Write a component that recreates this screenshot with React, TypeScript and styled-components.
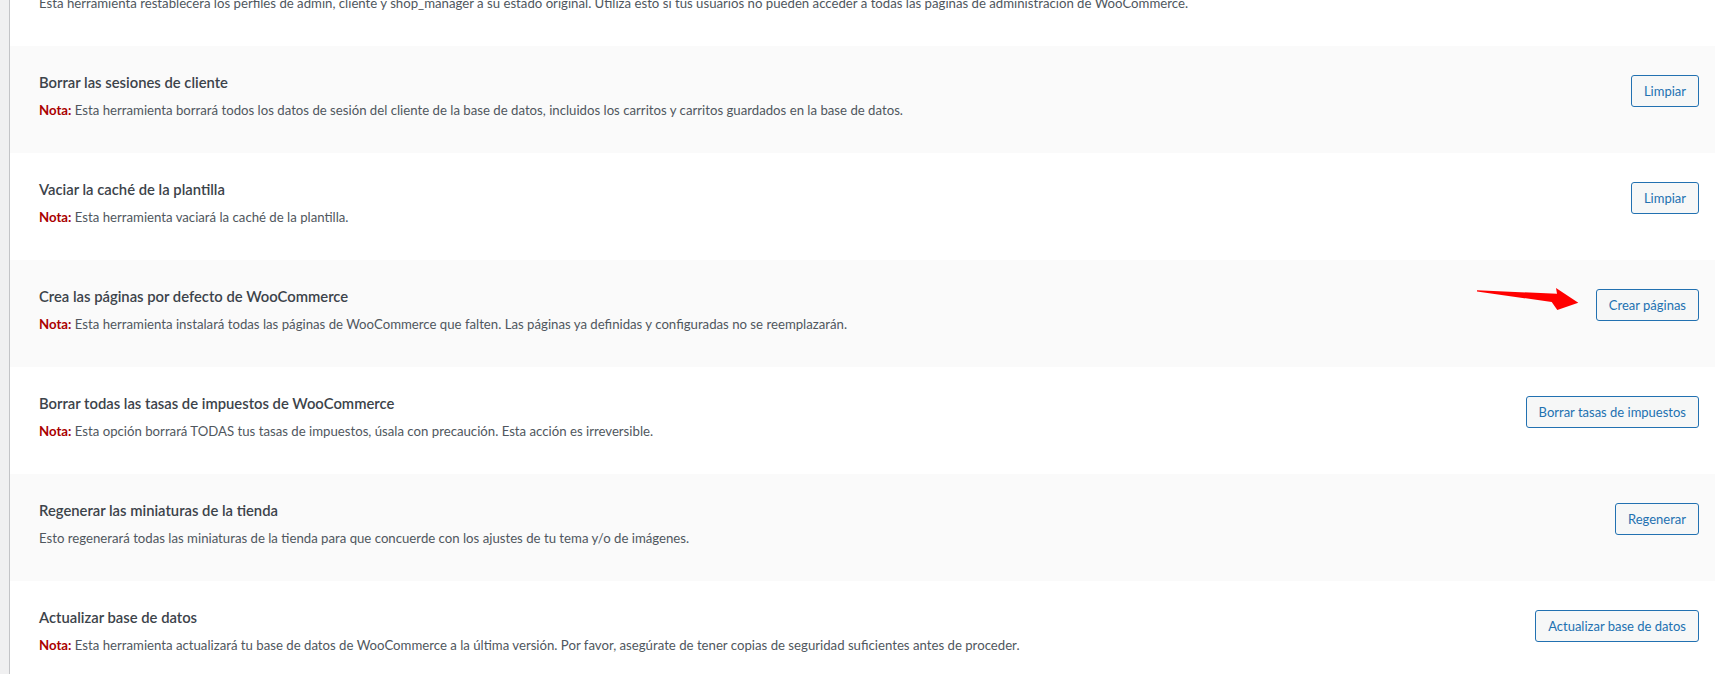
import React from "react";
import styled, { createGlobalStyle } from "styled-components";

const GlobalStyle = createGlobalStyle`
  html, body {
    margin: 0;
    padding: 0;
    overflow: hidden;
    background: #f0f0f1;
  }
  body {
    font-family: Lato, "Open Sans", "Noto Sans", sans-serif;
    color: #3c434a;
  }
  * { box-sizing: border-box; }
`;

const Page = styled.div`
  display: flex;
  width: 1715px;
  height: 674px;
  overflow: hidden;
  padding-left: 9px;
  background: #f0f0f1;
`;

const Table = styled.div`
  flex: 1;
  display: flex;
  flex-direction: column;
  background: #ffffff;
  border-left: 1px solid #c3c4c7;
`;

const PartialRow = styled.div`
  height: 46px;
  flex: none;
  display: flex;
  align-items: flex-end;
  padding: 0 16px 33px 29px;
  overflow: hidden;
  background: #ffffff;
`;

const Row = styled.div<{ $striped: boolean }>`
  height: 107px;
  flex: none;
  display: flex;
  align-items: flex-start;
  justify-content: space-between;
  padding: 0 16px 0 29px;
  background: ${(p) => (p.$striped ? "#fafafa" : "#ffffff")};
`;

const Info = styled.div`
  display: flex;
  flex-direction: column;
  padding-top: 26px;
`;

const Title = styled.div`
  font-size: 14.8px;
  line-height: 20px;
  font-weight: 600;
  color: #3c434a;
`;

const Description = styled.div<{ $spaced?: boolean }>`
  font-size: 13.2px;
  line-height: 20px;
  color: #50575e;
  margin-top: ${(p) => (p.$spaced ? "8px" : "0")};
  white-space: nowrap;
`;

const Note = styled.strong`
  font-weight: 700;
  color: #aa0000;
`;

const Action = styled.div`
  position: relative;
  margin-top: 29px;
  flex: none;
`;

const Button = styled.button`
  height: 32px;
  padding: 0 12px;
  font-family: inherit;
  font-size: 13px;
  line-height: 30px;
  color: #2271b1;
  background: #f6f7f7;
  border: 1px solid #2271b1;
  border-radius: 3px;
  cursor: pointer;
  white-space: nowrap;
`;

const Arrow = styled.svg`
  position: absolute;
  right: calc(100% + 17px);
  top: -1px;
  width: 102px;
  height: 23px;
  overflow: visible;
`;

type Tool = {
  title: string;
  note: boolean;
  text: string;
  button: string;
  arrow?: boolean;
};

const tools: Tool[] = [
  {
    title: "Borrar las sesiones de cliente",
    note: true,
    text: "Esta herramienta borrará todos los datos de sesión del cliente de la base de datos, incluidos los carritos y carritos guardados en la base de datos.",
    button: "Limpiar",
  },
  {
    title: "Vaciar la caché de la plantilla",
    note: true,
    text: "Esta herramienta vaciará la caché de la plantilla.",
    button: "Limpiar",
  },
  {
    title: "Crea las páginas por defecto de WooCommerce",
    note: true,
    text: "Esta herramienta instalará todas las páginas de WooCommerce que falten. Las páginas ya definidas y configuradas no se reemplazarán.",
    button: "Crear páginas",
    arrow: true,
  },
  {
    title: "Borrar todas las tasas de impuestos de WooCommerce",
    note: true,
    text: "Esta opción borrará TODAS tus tasas de impuestos, úsala con precaución. Esta acción es irreversible.",
    button: "Borrar tasas de impuestos",
  },
  {
    title: "Regenerar las miniaturas de la tienda",
    note: false,
    text: "Esto regenerará todas las miniaturas de la tienda para que concuerde con los ajustes de tu tema y/o de imágenes.",
    button: "Regenerar",
  },
  {
    title: "Actualizar base de datos",
    note: true,
    text: "Esta herramienta actualizará tu base de datos de WooCommerce a la última versión. Por favor, asegúrate de tener copias de seguridad suficientes antes de proceder.",
    button: "Actualizar base de datos",
  },
];

export default function App() {
  return (
    <>
      <GlobalStyle />
      <Page>
        <Table>
          <PartialRow>
            <Description>
              Esta herramienta restablecerá los perfiles de admin, cliente y shop_manager a su estado original. Utiliza esto si tus usuarios no pueden acceder a todas las páginas de administración de WooCommerce.
            </Description>
          </PartialRow>
          {tools.map((t, i) => (
            <Row key={t.title} $striped={i % 2 === 0}>
              <Info>
                <Title>{t.title}</Title>
                <Description $spaced>
                  {t.note && <Note>Nota:</Note>}
                  {t.note ? " " : ""}
                  {t.text}
                </Description>
              </Info>
              <Action>
                {t.arrow && (
                  <Arrow viewBox="0 0 102 23" aria-hidden="true">
                    <polygon
                      points="0,2.3 80,5.7 79,0 101.3,14.7 80.3,22 74.7,14 0,3.5"
                      fill="#ff0000"
                    />
                  </Arrow>
                )}
                <Button>{t.button}</Button>
              </Action>
            </Row>
          ))}
        </Table>
      </Page>
    </>
  );
}
